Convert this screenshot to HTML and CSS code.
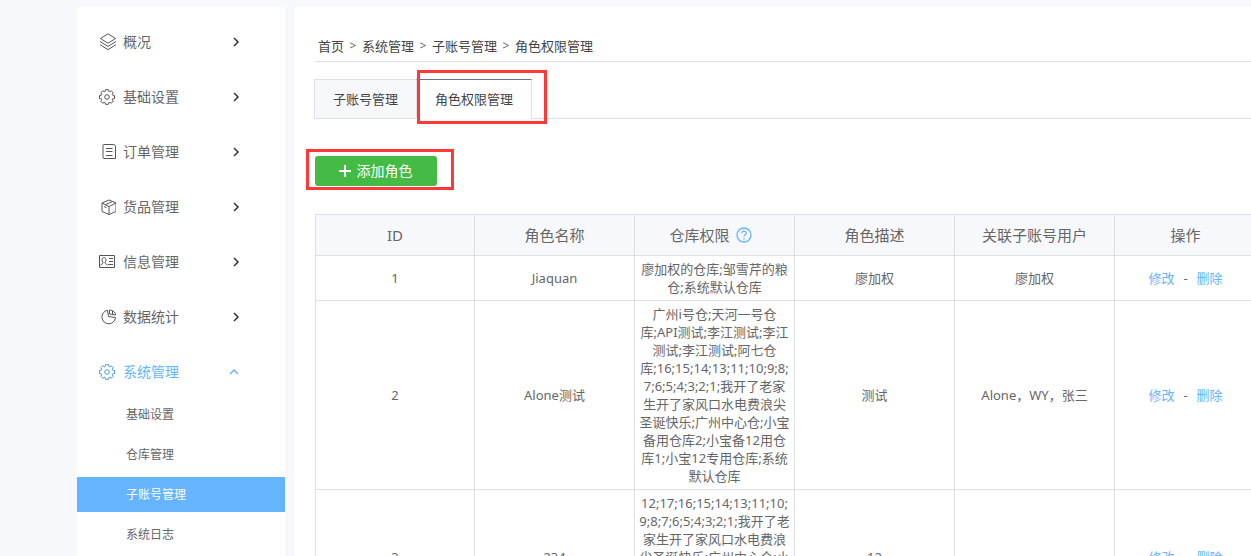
FILE: index.html
```html
<!DOCTYPE html>
<html lang="zh-CN">
<head>
<meta charset="utf-8">
<title>角色权限管理</title>
<link rel="stylesheet" href="styles.css">
</head>
<body>
<svg class="defs" aria-hidden="true">
  <symbol id="gear" viewBox="-9 -9 18 18">
    <path stroke-linejoin="round" d="M-1.800-5.700L-1.500-7.300H1.500L1.800-5.700 2.800-5.300 4.300-6.200 6.200-4.300 5.300-2.800 5.700-1.800 7.500-1.500V1.500L5.700 1.800 5.300 2.800 6.200 4.300 4.300 6.200 2.800 5.300 1.800 5.700 1.500 7.300H-1.500L-1.800 5.700-2.800 5.300-4.300 6.200-6.200 4.300-5.300 2.800-5.700 1.800-7.500 1.500V-1.500L-5.700-1.800-5.300-2.800-6.200-4.300-4.300-6.200-2.800-5.300z"/>
    <circle r="2.300"/>
  </symbol>
  <symbol id="right" viewBox="0 0 12 12"><path d="M4 2l4 4-4 4"/></symbol>
  <symbol id="up" viewBox="0 0 12 12"><path d="M2 8l4-4 4 4"/></symbol>
</svg>
<div class="layout">
  <nav class="sidebar">
    <ul class="menu">
      <li><a class="item" href="#"><svg class="icon" viewBox="0 0 18 18"><path d="M10 .8l7.500 4.700-7.500 4.700-7.500-4.700zM2 8.500l8 4.900 8-4.900M2 11.700l8 4.900 8-4.900"/></svg><span>概况</span><svg class="arrow"><use href="#right"/></svg></a></li>
      <li><a class="item" href="#"><svg class="icon"><use href="#gear"/></svg><span>基础设置</span><svg class="arrow"><use href="#right"/></svg></a></li>
      <li><a class="item" href="#"><svg class="icon" viewBox="0 0 18 18"><path d="M6 1.500h9.500q2 .2 2 2v12H6q-1 0-1-1v-12q0-1 1-1M8 5.500h6.500M8 8.500h6.500M8 12.500h6.500"/></svg><span>订单管理</span><svg class="arrow"><use href="#right"/></svg></a></li>
      <li><a class="item" href="#"><svg class="icon" viewBox="0 0 18 18"><path d="M11 2l7 3v8.500l-7 3-7-3V5zM4 5l7 3.500 7-3.500M11 8.500v8M7.500 6.700L14.500 3.500M6 8.500l2.500 1.200"/></svg><span>货品管理</span><svg class="arrow"><use href="#right"/></svg></a></li>
      <li><a class="item" href="#"><svg class="icon" viewBox="0 0 18 18"><path d="M1.500 2.500h15v12h-15zM11 5.500h4M11 8.500h4M10 11.500h5M2.500 12.500c.5-1.500 2-1.500 2.500-2.200.3-.8-1-1.800-1-3.500C4 3.800 8 3.800 8 6.800c0 1.700-1.300 2.700-1 3.500.5.7 2 .7 2.500 2.200"/></svg><span>信息管理</span><svg class="arrow"><use href="#right"/></svg></a></li>
      <li><a class="item" href="#"><svg class="icon" viewBox="0 0 18 18"><path d="M9.500 2.300A6.800 6.800 0 1 0 17.500 9.500L10.500 8.500zM11.500 2V6l6.300 1A6.500 5.500 0 0 0 11.500 2M14.500 3V6.500"/></svg><span>数据统计</span><svg class="arrow"><use href="#right"/></svg></a></li>
      <li>
        <a class="item open" href="#"><svg class="icon"><use href="#gear"/></svg><span>系统管理</span><svg class="arrow"><use href="#up"/></svg></a>
        <ul class="submenu">
          <li><a href="#">基础设置</a></li>
          <li><a href="#">仓库管理</a></li>
          <li><a class="current" href="#">子账号管理</a></li>
          <li><a href="#">系统日志</a></li>
        </ul>
      </li>
    </ul>
  </nav>
  <main class="main">
    <nav class="crumbs"><a href="#">首页</a><i>&gt;</i><a href="#">系统管理</a><i>&gt;</i><a href="#">子账号管理</a><i>&gt;</i><a href="#">角色权限管理</a></nav>
    <div class="tabs">
      <a class="tab" href="#">子账号管理</a>
      <a class="tab active" href="#">角色权限管理<span class="mark mark-tab"></span></a>
    </div>
    <div class="toolbar">
      <button class="add" type="button"><svg class="plus" viewBox="0 0 14 14"><path d="M7 1v12M1 7h12"/></svg>添加角色</button>
      <span class="mark mark-add"></span>
    </div>
    <div class="table-wrap">
      <table>
        <colgroup><col class="c"><col class="c"><col class="c"><col class="c"><col class="c"><col></colgroup>
        <thead>
          <tr><th>ID</th><th>角色名称</th><th><span class="with-help">仓库权限<svg class="help" viewBox="0 0 16 16"><circle cx="8" cy="8" r="7"/><path d="M5.800 6.200c0-3 4.500-2.800 4.400 0C10.200 7.700 8 7.800 8 9.500M8 11v1.400"/></svg></span></th><th>角色描述</th><th>关联子账号用户</th><th>操作</th></tr>
        </thead>
        <tbody>
          <tr><td>1</td><td>Jiaquan</td><td>廖加权的仓库;邹雪芹的粮<br>仓;系统默认仓库</td><td>廖加权</td><td>廖加权</td><td class="ops"><a href="#">修改</a><i>-</i><a href="#">删除</a></td></tr>
          <tr><td>2</td><td>Alone测试</td><td>广州i号仓;天河一号仓<br>库;API测试;李江测试;李江<br>测试;李江测试;阿七仓<br>库;16;15;14;13;11;10;9;8;<br>7;6;5;4;3;2;1;我开了老家<br>生开了家风口水电费浪尖<br>圣诞快乐;广州中心仓;小宝<br>备用仓库2;小宝备12用仓<br>库1;小宝12专用仓库;系统<br>默认仓库</td><td>测试</td><td>Alone，WY，张三</td><td class="ops"><a href="#">修改</a><i>-</i><a href="#">删除</a></td></tr>
          <tr><td>3</td><td>234</td><td>12;17;16;15;14;13;11;10;<br>9;8;7;6;5;4;3;2;1;我开了老<br>家生开了家风口水电费浪<br>尖圣诞快乐;广州中心仓;小<br>宝备用仓库2;小宝备12用<br>仓库1;小宝12专用仓库;系<br>统默认仓库</td><td>12</td><td></td><td class="ops"><a href="#">修改</a><i>-</i><a href="#">删除</a></td></tr>
        </tbody>
      </table>
    </div>
  </main>
</div>
</body>
</html>
```
FILE: styles.css
```css
* { box-sizing: border-box; }
body {
  margin: 0;
  background: #f7f8fc;
  color: #666;
  font: 13px/18px "Noto Sans", "Noto Sans CJK SC", sans-serif;
  height: 100vh;
  overflow: hidden;
}
a { color: inherit; text-decoration: none; }
i { font-style: normal; }
ul { list-style: none; margin: 0; padding: 0; }
svg { fill: none; stroke: currentColor; flex: none; }
.defs { position: absolute; width: 0; height: 0; }

.layout { display: flex; gap: 10px; padding: 7px 0 0 77px; height: 100vh; overflow: hidden; }
.sidebar { flex: none; width: 208px; background: #fff; padding-top: 10px; }
.menu { display: grid; gap: 5px; }
.item { display: flex; align-items: center; height: 50px; padding: 0 43px 0 21px; font-size: 14px; }
.item span { flex: 1; margin-left: 7px; }
.icon { width: 18px; height: 18px; color: #555; }
.arrow { width: 12px; height: 12px; color: #333; stroke-width: 1.5; }
.open, .open .icon, .open .arrow { color: #64b4ff; }
.open .icon { color: #4a98e0; }
.open .arrow { margin-right: 2px; }
.submenu { display: grid; gap: 5px; font-size: 12px; }
.submenu a { display: block; padding-left: 49px; line-height: 35px; }
.submenu .current { background: #64b4ff; color: #fff; }

.main { flex: 1; min-width: 0; background: #fff; padding: 24px 0 0 20px; overflow: hidden; }
.crumbs { display: flex; padding: 6px 3px; color: #444; border-bottom: 1px solid #dcdfe3; }
.crumbs i { width: 18px; text-align: center; font-size: 12px; color: #666; }

.tabs { display: flex; margin: 17px 0 0 -1px; border-bottom: 1px solid #dcdfe3; }
.tab {
  position: relative;
  height: 40px;
  margin-bottom: -1px;
  padding: 0 18px;
  line-height: 38px;
  color: #444;
  background: #f7f8fc;
  border: 1px solid #dcdfe3;
  border-right: 0;
}
.active { background: #fff; border: 1px solid #dcdfe3; border-top-color: #6b7280; border-bottom-color: #fff; }
.mark { position: absolute; border: 3px solid #ff3838; pointer-events: none; }
.mark-tab { inset: -10px -16px -6px 0; }
.toolbar { position: relative; width: fit-content; margin-top: 37px; }
.mark-add { inset: -7px -17px -4px -9px; }
.add {
  display: flex;
  align-items: center;
  justify-content: center;
  gap: 5px;
  width: 122px;
  height: 30px;
  padding: 0 2px 0 0;
  border: 0;
  border-radius: 3px;
  background: #44bb44;
  color: #fff;
  font: inherit;
  font-size: 14px;
}
.plus { width: 14px; height: 14px; stroke-width: 2; }

.table-wrap { margin-top: 28px; overflow: hidden; }
table { width: calc(100% + 6px); table-layout: fixed; border-collapse: collapse; text-align: center; }
.c { width: 160px; }
.c:first-child { width: 159px; }
th, td { border: 1px solid #dcdfe3; padding: 4px 0; white-space: nowrap; }
th { height: 41px; background: #f7f8fc; font-size: 15px; font-weight: 400; }
.with-help { display: inline-flex; align-items: center; gap: 6px; margin-right: 8px; }
.help { width: 16px; height: 16px; color: #64b4ff; stroke-width: 1.3; }
.ops a { color: #64b4ff; }
.ops i { margin: 0 9px; }
```
